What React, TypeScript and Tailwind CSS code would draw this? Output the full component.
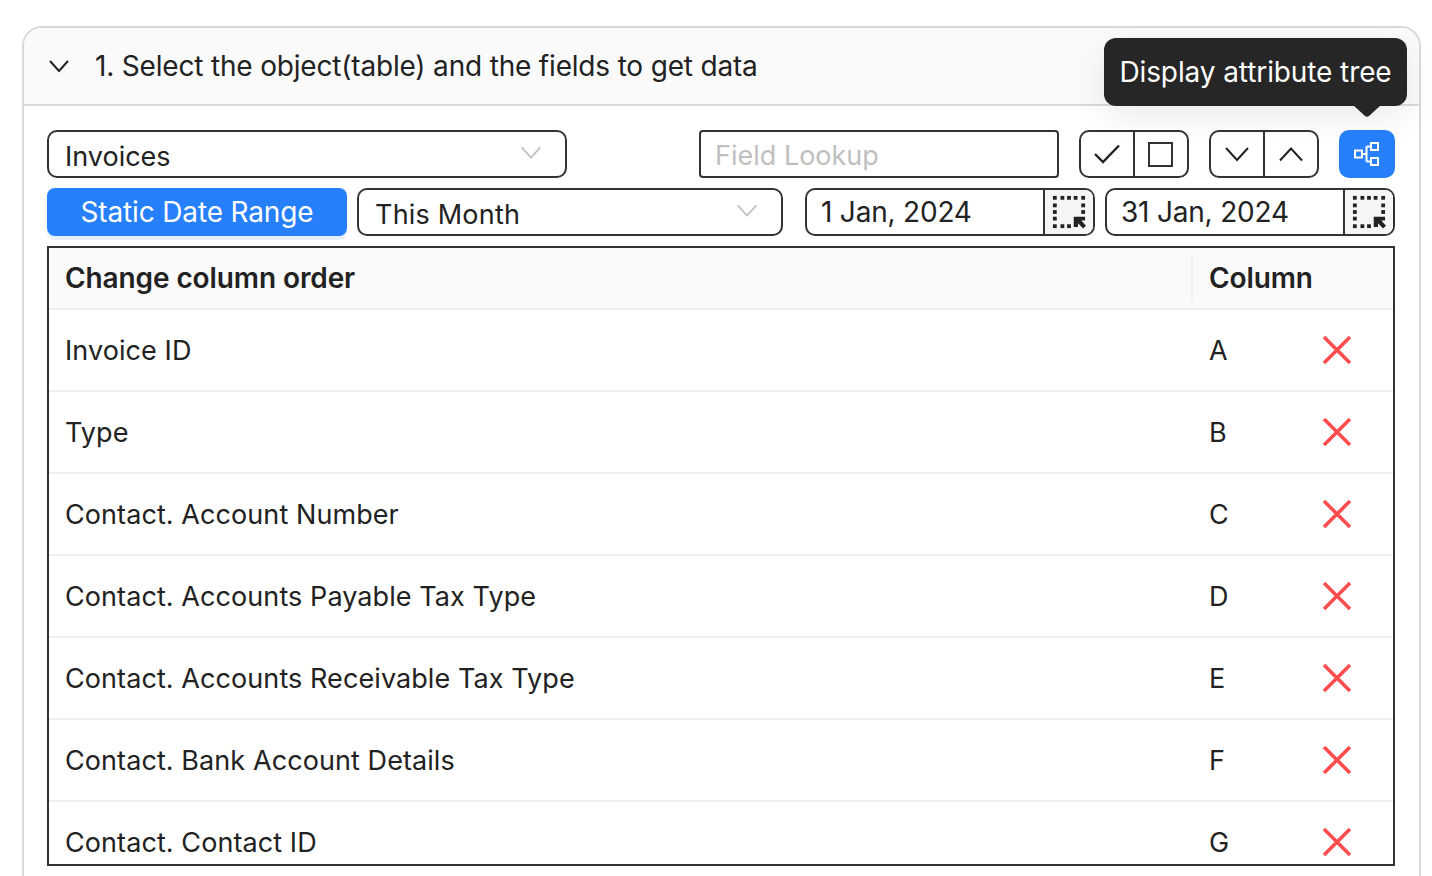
import React from "react";

const rows: [string, string][] = [
  ["Invoice ID", "A"],
  ["Type", "B"],
  ["Contact. Account Number", "C"],
  ["Contact. Accounts Payable Tax Type", "D"],
  ["Contact. Accounts Receivable Tax Type", "E"],
  ["Contact. Bank Account Details", "F"],
  ["Contact. Contact ID", "G"],
];

function Chevron({ up = false, className = "" }: { up?: boolean; className?: string }) {
  return (
    <svg width="26" height="16" viewBox="0 0 26 16" fill="none" className={className}>
      <path d={up ? "M2 14.5 13 2.5 24 14.5" : "M2 2 13 14 24 2"} stroke="currentColor" strokeWidth="2" />
    </svg>
  );
}

function PickIcon() {
  return (
    <svg width="34" height="34" viewBox="0 0 36 36" fill="none">
      <g fill="#222">
        <rect x="1" y="1" width="4" height="4" />
        <rect x="9" y="1" width="4" height="4" />
        <rect x="16" y="1" width="4" height="4" />
        <rect x="23" y="1" width="4" height="4" />
        <rect x="31" y="1" width="4" height="4" />
        <rect x="1" y="9" width="4" height="4" />
        <rect x="31" y="9" width="4" height="4" />
        <rect x="1" y="16" width="4" height="4" />
        <rect x="31" y="16" width="4" height="4" />
        <rect x="1" y="23" width="4" height="4" />
        <rect x="1" y="31" width="4" height="4" />
        <rect x="9" y="31" width="4" height="4" />
        <rect x="16" y="31" width="4" height="4" />
        <path d="M23 23h12v4h-4l5 5.500-3 3-5.500-5.500v4h-4.500z" />
      </g>
    </svg>
  );
}

function DateField({ value }: { value: string }) {
  return (
    <div className="flex h-12 w-[290px] items-stretch overflow-hidden rounded-[10px] border-2 border-[#333] bg-white">
      <div className="flex flex-1 items-center pl-[14px] text-[28px] tracking-[-0.2px] text-[#222]">{value}</div>
      <div className="flex w-[50px] items-center justify-center border-l-2 border-[#333] bg-[#f5f5f5]">
        <PickIcon />
      </div>
    </div>
  );
}

export default function App() {
  return (
    <div className="h-[876px] w-[1432px] overflow-hidden bg-white font-['Inter',sans-serif] text-[#222]">
      <div className="pl-[22px] pt-[26px]">
        <div className="relative h-[900px] w-[1399px] rounded-t-[20px] border-2 border-[#d9d9d9] bg-white">
          <div className="flex h-[78px] items-center rounded-t-[18px] border-b-2 border-[#d9d9d9] bg-[#fafafa] pl-[25px]">
            <svg width="20" height="14" viewBox="0 0 20 14" fill="none" className="text-[#222]">
              <path d="M1 2 10 12 19 2" stroke="currentColor" strokeWidth="2" />
            </svg>
            <span className="ml-[26px] text-[28px] tracking-[-0.18px]">1. Select the object(table) and the fields to get data</span>
          </div>

          <div className="absolute left-[1080px] top-[10px] z-10 flex h-[68px] w-[303px] items-center justify-center rounded-[12px] bg-[#262626] text-[28px] tracking-[-0.1px] text-white shadow-[0_12px_32px_rgba(0,0,0,0.08)]">
            Display attribute tree
            <svg width="28" height="12" viewBox="0 0 28 12" className="absolute left-[249px] top-[67px]">
              <path d="M0 0H28L16 11Q14 12.500 12 11Z" fill="#262626" />
            </svg>
          </div>

          <div className="px-[23px] pt-[24px]">
            <div className="flex h-12 items-stretch">
              <div className="flex w-[520px] items-center justify-between rounded-[10px] border-2 border-[#333] bg-white pl-[16px] pr-[23px]">
                <span className="pt-[6px] text-[27px]">Invoices</span>
                <Chevron className="mb-1 h-[15px] w-[22px] text-[#bfbfbf]" />
              </div>
              <div className="ml-[132px] flex w-[360px] items-center rounded-[4px] border-2 border-[#333] pl-[14px] pt-[4px] text-[27px] text-[#bfbfbf]">
                Field Lookup
              </div>
              <div className="ml-[20px] flex w-[110px] rounded-[10px] border-2 border-[#333]">
                <div className="flex w-[54px] items-center justify-center border-r-2 border-[#333]">
                  <svg width="26" height="20" viewBox="0 0 26 20" fill="none">
                    <path d="M1 10 9 18 25 1.500" stroke="#222" strokeWidth="2.400" />
                  </svg>
                </div>
                <div className="flex flex-1 items-center justify-center pr-[2px]">
                  <div className="h-[25px] w-[25px] border-[2.500px] border-[#333]" />
                </div>
              </div>
              <div className="ml-[20px] flex w-[110px] rounded-[10px] border-2 border-[#333] text-[#222]">
                <div className="flex w-[54px] items-center justify-center border-r-2 border-[#333]">
                  <Chevron />
                </div>
                <div className="flex flex-1 items-center justify-center">
                  <Chevron up />
                </div>
              </div>
              <div className="ml-[20px] flex w-[56px] items-center justify-center rounded-[10px] bg-[#2680fb]">
                <svg width="26" height="26" viewBox="0 0 26 26" fill="none" stroke="white" strokeWidth="2">
                  <rect x="1" y="9.500" width="7" height="7" />
                  <rect x="17" y="2" width="7" height="7" />
                  <rect x="17" y="17" width="7" height="7" />
                  <path d="M8 13H12.500M12.500 5.500V20.500M12.500 5.500H17M12.500 20.500H17" />
                </svg>
              </div>
            </div>

            <div className="mt-[10px] flex h-12 items-stretch">
              <div className="flex w-[300px] items-center justify-center rounded-[8px] bg-[#2680fb] text-[28px] tracking-[-0.15px] text-white shadow-[0_4px_0_#e6f1ff]">
                Static Date Range
              </div>
              <div className="ml-[10px] flex w-[426px] items-center justify-between rounded-[10px] border-2 border-[#333] pl-[16px] pr-[23px]">
                <span className="pt-[6px] text-[27px] tracking-[0.2px]">This Month</span>
                <Chevron className="mb-1 h-[15px] w-[22px] text-[#bfbfbf]" />
              </div>
              <div className="ml-[22px]">
                <DateField value="1 Jan, 2024" />
              </div>
              <div className="ml-[10px]">
                <DateField value="31 Jan, 2024" />
              </div>
            </div>

            <div className="mt-[10px] h-[620px] w-[1348px] overflow-hidden border-2 border-[#333]">
              <div className="flex h-[62px] items-center border-b-2 border-[#f0f0f0] bg-[#fafafa] text-[28px] font-semibold tracking-[-0.1px]">
                <div className="w-[1142px] pl-[16px]">Change column order</div>
                <div className="h-[44px] w-[2px] bg-[#f0f0f0]" />
                <div className="pl-[16px]">Column</div>
              </div>
              {rows.map(([name, col]) => (
                <div key={col} className="flex h-[82px] shrink-0 items-center border-b-2 border-[#f0f0f0] text-[27px] tracking-[0.08px]">
                  <div className="w-[1144px] pl-[16px] pt-[2px]">{name}</div>
                  <div className="w-[129px] pl-[16px] pt-[2px]">{col}</div>
                  <svg width="30" height="30" viewBox="0 0 30 30" fill="none">
                    <path d="M2 2 28 28M28 2 2 28" stroke="#ff4d4f" strokeWidth="3.600" />
                  </svg>
                </div>
              ))}
            </div>
          </div>
        </div>
      </div>
    </div>
  );
}
